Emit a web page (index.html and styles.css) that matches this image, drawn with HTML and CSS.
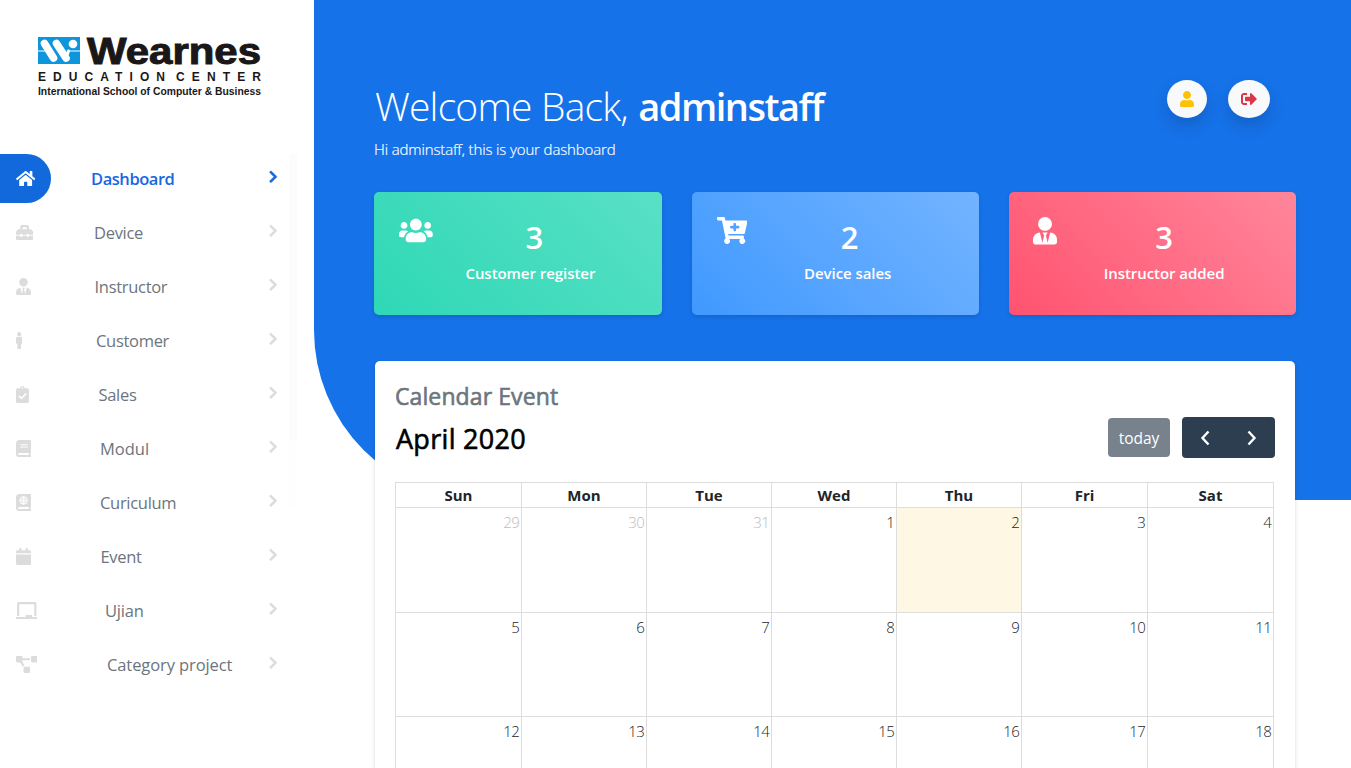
FILE: index.html
```html
<!DOCTYPE html>
<html lang="en">
<head>
<meta charset="utf-8">
<title>Dashboard</title>
<link rel="stylesheet" href="styles.css">
</head>
<body>
<div class="app">
  <aside class="sidebar">
    <svg class="logo" viewBox="0 0 226 62" role="img">
      <rect x="0" y="1" width="42" height="27" fill="#0e96dc"/>
      <g stroke="#fff" stroke-linecap="round" fill="none">
        <path d="M0 15h8M32 15h10" stroke-width="1.2"/>
        <path d="M6.500 7.500l9 14.500M18.500 7.500l9.500 14.500" stroke-width="7.600"/>
        <path d="M29.500 18l1-3" stroke-width="3"/>
      </g>
      <circle cx="35" cy="8" r="4.300" fill="#fff"/>
      <text class="logo-name" x="49" y="27.500" textLength="174" lengthAdjust="spacingAndGlyphs">Wearnes</text>
      <text class="logo-sub" x="0" y="44.500" textLength="127">EDUCATION</text>
      <text class="logo-sub" x="138" y="44.500" textLength="85">CENTER</text>
      <text class="logo-tag" x="0" y="58.500" textLength="223" lengthAdjust="spacingAndGlyphs">International School of Computer &amp; Business</text>
    </svg>
    <nav class="menu">
      <a class="item active"><span class="item-icon"><svg viewBox="0 0 576 512"><path d="M280.37 148.26L96 300.11V464a16 16 0 0 0 16 16l112.06-.29a16 16 0 0 0 15.92-16V368a16 16 0 0 1 16-16h64a16 16 0 0 1 16 16v95.64a16 16 0 0 0 16 16.05L464 480a16 16 0 0 0 16-16V300L295.67 148.26a12.19 12.19 0 0 0-15.3 0zM571.6 251.47L488 182.56V44.05a12 12 0 0 0-12-12h-56a12 12 0 0 0-12 12v72.61L318.47 43a48 48 0 0 0-61 0L4.34 251.47a12 12 0 0 0-1.6 16.9l25.500 31A12 12 0 0 0 45.15 301l235.22-193.740a12.19 12.19 0 0 1 15.300 0L530.9 301a12 12 0 0 0 16.900-1.600l25.500-31a12 12 0 0 0-1.700-16.930z"/></svg></span><span class="item-label l-dashboard">Dashboard</span><svg class="chev" viewBox="0 0 320 512"><path d="M285.476 272.971L91.132 467.314c-9.373 9.373-24.569 9.373-33.941 0l-22.667-22.667c-9.357-9.357-9.375-24.522-.04-33.901L188.505 256 34.484 101.255c-9.335-9.379-9.317-24.544.04-33.901l22.667-22.667c9.373-9.373 24.569-9.373 33.941 0L285.475 239.03c9.373 9.372 9.373 24.568.001 33.941z"/></svg></a>
      <a class="item"><span class="item-icon"><svg viewBox="0 0 512 512"><path d="M502.63 214.63l-45.25-45.25c-6-6-14.14-9.37-22.63-9.37H384V80c0-26.51-21.49-48-48-48H176c-26.51 0-48 21.49-48 48v80H77.25c-8.49 0-16.62 3.37-22.63 9.37L9.37 214.63c-6 6-9.37 14.14-9.37 22.63V320h128v-16c0-8.84 7.16-16 16-16h32c8.84 0 16 7.16 16 16v16h128v-16c0-8.84 7.16-16 16-16h32c8.84 0 16 7.16 16 16v16h128v-82.75c0-8.48-3.37-16.62-9.37-22.62zM320 160H192V96h128v64zm64 208c0 8.84-7.16 16-16 16h-32c-8.84 0-16-7.16-16-16v-16H192v16c0 8.84-7.16 16-16 16h-32c-8.84 0-16-7.16-16-16v-16H0v96c0 17.67 14.33 32 32 32h448c17.67 0 32-14.33 32-32v-96H384v16z"/></svg></span><span class="item-label l-device">Device</span><svg class="chev" viewBox="0 0 320 512"><path d="M285.476 272.971L91.132 467.314c-9.373 9.373-24.569 9.373-33.941 0l-22.667-22.667c-9.357-9.357-9.375-24.522-.04-33.901L188.505 256 34.484 101.255c-9.335-9.379-9.317-24.544.04-33.901l22.667-22.667c9.373-9.373 24.569-9.373 33.941 0L285.475 239.03c9.373 9.372 9.373 24.568.001 33.941z"/></svg></a>
      <a class="item"><span class="item-icon"><svg viewBox="0 0 448 512"><path d="M224 256c70.7 0 128-57.3 128-128S294.7 0 224 0 96 57.3 96 128s57.3 128 128 128zm95.8 32.6L272 480l-32-136 32-56h-96l32 56-32 136-47.8-191.4C56.9 292 0 350.3 0 422.4V464c0 26.5 21.5 48 48 48h352c26.5 0 48-21.5 48-48v-41.6c0-72.1-56.9-130.4-128.2-133.8z"/></svg></span><span class="item-label l-instructor">Instructor</span><svg class="chev" viewBox="0 0 320 512"><path d="M285.476 272.971L91.132 467.314c-9.373 9.373-24.569 9.373-33.941 0l-22.667-22.667c-9.357-9.357-9.375-24.522-.04-33.901L188.505 256 34.484 101.255c-9.335-9.379-9.317-24.544.04-33.901l22.667-22.667c9.373-9.373 24.569-9.373 33.941 0L285.475 239.03c9.373 9.372 9.373 24.568.001 33.941z"/></svg></a>
      <a class="item"><span class="item-icon"><svg viewBox="0 0 192 512"><path d="M96 0c35.346 0 64 28.654 64 64s-28.654 64-64 64-64-28.654-64-64S60.654 0 96 0m48 144h-11.36c-22.711 10.443-49.59 10.894-73.28 0H48c-26.51 0-48 21.49-48 48v136c0 13.255 10.745 24 24 24h16v136c0 13.255 10.745 24 24 24h64c13.255 0 24-10.745 24-24V352h16c13.255 0 24-10.745 24-24V192c0-26.51-21.49-48-48-48z"/></svg></span><span class="item-label l-customer">Customer</span><svg class="chev" viewBox="0 0 320 512"><path d="M285.476 272.971L91.132 467.314c-9.373 9.373-24.569 9.373-33.941 0l-22.667-22.667c-9.357-9.357-9.375-24.522-.04-33.901L188.505 256 34.484 101.255c-9.335-9.379-9.317-24.544.04-33.901l22.667-22.667c9.373-9.373 24.569-9.373 33.941 0L285.475 239.03c9.373 9.372 9.373 24.568.001 33.941z"/></svg></a>
      <a class="item"><span class="item-icon"><svg viewBox="0 0 384 512"><path fill-rule="evenodd" d="M336 64h-80c0-35.300-28.700-64-64-64s-64 28.700-64 64H48C21.500 64 0 85.500 0 112v352c0 26.500 21.500 48 48 48h288c26.500 0 48-21.500 48-48V112c0-26.500-21.500-48-48-48zM192 40c13.300 0 24 10.700 24 24s-10.700 24-24 24-24-10.700-24-24 10.700-24 24-24z"/><path class="cut" d="M86 290l76 76 142-142"/></svg></span><span class="item-label l-sales">Sales</span><svg class="chev" viewBox="0 0 320 512"><path d="M285.476 272.971L91.132 467.314c-9.373 9.373-24.569 9.373-33.941 0l-22.667-22.667c-9.357-9.357-9.375-24.522-.04-33.901L188.505 256 34.484 101.255c-9.335-9.379-9.317-24.544.04-33.901l22.667-22.667c9.373-9.373 24.569-9.373 33.941 0L285.475 239.03c9.373 9.372 9.373 24.568.001 33.941z"/></svg></a>
      <a class="item"><span class="item-icon"><svg viewBox="0 0 448 512"><path d="M448 360V24c0-13.3-10.7-24-24-24H96C43 0 0 43 0 96v320c0 53 43 96 96 96h328c13.3 0 24-10.7 24-24v-16c0-7.5-3.5-14.3-8.9-18.7-4.2-15.4-4.2-59.3 0-74.7 5.4-4.3 8.9-11.1 8.9-18.6zM128 134c0-3.3 2.7-6 6-6h212c3.3 0 6 2.7 6 6v20c0 3.3-2.7 6-6 6H134c-3.3 0-6-2.7-6-6v-20zm0 64c0-3.3 2.7-6 6-6h212c3.3 0 6 2.7 6 6v20c0 3.3-2.7 6-6 6H134c-3.3 0-6-2.7-6-6v-20zm253.4 250H96c-17.7 0-32-14.3-32-32 0-17.6 14.4-32 32-32h285.4c-1.9 17.1-1.9 46.9 0 64z"/></svg></span><span class="item-label l-modul">Modul</span><svg class="chev" viewBox="0 0 320 512"><path d="M285.476 272.971L91.132 467.314c-9.373 9.373-24.569 9.373-33.941 0l-22.667-22.667c-9.357-9.357-9.375-24.522-.04-33.901L188.505 256 34.484 101.255c-9.335-9.379-9.317-24.544.04-33.901l22.667-22.667c9.373-9.373 24.569-9.373 33.941 0L285.475 239.03c9.373 9.372 9.373 24.568.001 33.941z"/></svg></a>
      <a class="item"><span class="item-icon"><svg viewBox="0 0 448 512"><path d="M448 360V24c0-13.3-10.7-24-24-24H96C43 0 0 43 0 96v320c0 53 43 96 96 96h328c13.3 0 24-10.7 24-24v-16c0-7.5-3.5-14.3-8.9-18.7-4.2-15.4-4.2-59.3 0-74.7 5.4-4.3 8.9-11.1 8.9-18.6zM381.4 448H96c-17.7 0-32-14.3-32-32 0-17.6 14.4-32 32-32h285.4c-1.900 17.100-1.900 46.900 0 64z"/><g class="globe"><circle cx="224" cy="192" r="114"/><ellipse cx="224" cy="192" rx="50" ry="114"/><path d="M110 192h228M224 78v228"/></g></svg></span><span class="item-label l-curiculum">Curiculum</span><svg class="chev" viewBox="0 0 320 512"><path d="M285.476 272.971L91.132 467.314c-9.373 9.373-24.569 9.373-33.941 0l-22.667-22.667c-9.357-9.357-9.375-24.522-.04-33.901L188.505 256 34.484 101.255c-9.335-9.379-9.317-24.544.04-33.901l22.667-22.667c9.373-9.373 24.569-9.373 33.941 0L285.475 239.03c9.373 9.372 9.373 24.568.001 33.941z"/></svg></a>
      <a class="item"><span class="item-icon"><svg viewBox="0 0 448 512"><path d="M12 192h424c6.6 0 12 5.4 12 12v260c0 26.5-21.5 48-48 48H48c-26.5 0-48-21.5-48-48V204c0-6.6 5.4-12 12-12zm436-44v-36c0-26.5-21.5-48-48-48h-48V12c0-6.6-5.4-12-12-12h-40c-6.6 0-12 5.4-12 12v52H160V12c0-6.6-5.4-12-12-12h-40c-6.6 0-12 5.4-12 12v52H48C21.5 64 0 85.5 0 112v36c0 6.600 5.400 12 12 12h424c6.600 0 12-5.400 12-12z"/></svg></span><span class="item-label l-event">Event</span><svg class="chev" viewBox="0 0 320 512"><path d="M285.476 272.971L91.132 467.314c-9.373 9.373-24.569 9.373-33.941 0l-22.667-22.667c-9.357-9.357-9.375-24.522-.04-33.901L188.505 256 34.484 101.255c-9.335-9.379-9.317-24.544.04-33.901l22.667-22.667c9.373-9.373 24.569-9.373 33.941 0L285.475 239.03c9.373 9.372 9.373 24.568.001 33.941z"/></svg></a>
      <a class="item"><span class="item-icon"><svg viewBox="0 0 640 512"><path d="M96 64h448v352h64V40c0-22.06-17.94-40-40-40H72C49.94 0 32 17.94 32 40v376h64V64zm528 384H480v-64H288v64H16c-8.84 0-16 7.16-16 16v32c0 8.84 7.16 16 16 16h608c8.84 0 16-7.16 16-16v-32c0-8.84-7.16-16-16-16z"/></svg></span><span class="item-label l-ujian">Ujian</span><svg class="chev" viewBox="0 0 320 512"><path d="M285.476 272.971L91.132 467.314c-9.373 9.373-24.569 9.373-33.941 0l-22.667-22.667c-9.357-9.357-9.375-24.522-.04-33.901L188.505 256 34.484 101.255c-9.335-9.379-9.317-24.544.04-33.901l22.667-22.667c9.373-9.373 24.569-9.373 33.941 0L285.475 239.03c9.373 9.372 9.373 24.568.001 33.941z"/></svg></a>
      <a class="item"><span class="item-icon"><svg viewBox="0 0 640 512"><path d="M384 320H256c-17.67 0-32 14.33-32 32v128c0 17.67 14.33 32 32 32h128c17.67 0 32-14.33 32-32V352c0-17.67-14.33-32-32-32zM192 32c0-17.67-14.33-32-32-32H32C14.33 0 0 14.33 0 32v128c0 17.67 14.33 32 32 32h95.72l73.16 128.04C211.98 300.98 232.4 288 256 288h.28L192 175.51V128h224V64H192V32zM608 0H480c-17.67 0-32 14.33-32 32v128c0 17.67 14.33 32 32 32h128c17.67 0 32-14.33 32-32V32c0-17.67-14.33-32-32-32z"/></svg></span><span class="item-label l-category">Category project</span><svg class="chev" viewBox="0 0 320 512"><path d="M285.476 272.971L91.132 467.314c-9.373 9.373-24.569 9.373-33.941 0l-22.667-22.667c-9.357-9.357-9.375-24.522-.04-33.901L188.505 256 34.484 101.255c-9.335-9.379-9.317-24.544.04-33.901l22.667-22.667c9.373-9.373 24.569-9.373 33.941 0L285.475 239.03c9.373 9.372 9.373 24.568.001 33.941z"/></svg></a>
      <span class="rail"></span>
    </nav>
  </aside>

  <main class="main">
    <div class="backdrop"></div>
    <div class="content">
      <header class="top">
        <div>
          <h1 class="welcome">Welcome Back, <b>adminstaff</b></h1>
          <p class="hint">Hi adminstaff, this is your dashboard</p>
        </div>
        <div class="actions">
          <button class="round user"><svg viewBox="0 0 448 512"><path d="M224 256c70.7 0 128-57.3 128-128S294.7 0 224 0 96 57.3 96 128s57.3 128 128 128zm89.6 32h-16.7c-22.2 10.2-46.9 16-72.9 16s-50.6-5.8-72.9-16h-16.7C60.2 288 0 348.2 0 422.4V464c0 26.5 21.5 48 48 48h352c26.5 0 48-21.5 48-48v-41.6c0-74.2-60.2-134.4-134.4-134.4z"/></svg></button>
          <button class="round exit"><svg viewBox="0 0 512 512"><path d="M497 273L329 441c-15 15-41 4.5-41-17v-96H152c-13.3 0-24-10.7-24-24v-96c0-13.3 10.7-24 24-24h136V88c0-21.4 25.9-32 41-17l168 168c9.3 9.4 9.3 24.6 0 34zM192 436v-40c0-6.6-5.4-12-12-12H96c-17.7 0-32-14.3-32-32V160c0-17.7 14.3-32 32-32h84c6.6 0 12-5.4 12-12V76c0-6.6-5.4-12-12-12H96c-53 0-96 43-96 96v192c0 53 43 96 96 96h84c6.6 0 12-5.4 12-12z"/></svg></button>
        </div>
      </header>

      <section class="cards">
        <article class="card green">
          <svg viewBox="0 0 640 512"><path d="M96 224c35.3 0 64-28.7 64-64s-28.7-64-64-64-64 28.7-64 64 28.7 64 64 64zm448 0c35.3 0 64-28.7 64-64s-28.7-64-64-64-64 28.7-64 64 28.7 64 64 64zm32 32h-64c-17.6 0-33.5 7.1-45.1 18.6 40.3 22.1 68.9 62 75.1 109.4h66c17.7 0 32-14.3 32-32v-32c0-35.3-28.7-64-64-64zm-256 0c61.9 0 112-50.1 112-112S381.9 32 320 32 208 82.1 208 144s50.1 112 112 112zm76.8 32h-8.3c-20.8 10-43.9 16-68.5 16s-47.6-6-68.5-16h-8.3C179.6 288 128 339.6 128 403.2V432c0 26.5 21.5 48 48 48h288c26.5 0 48-21.5 48-48v-28.8c0-63.6-51.6-115.2-115.2-115.2zm-223.7-13.4C161.5 263.1 145.6 256 128 256H64c-35.3 0-64 28.7-64 64v32c0 17.7 14.3 32 32 32h65.9c6.3-47.4 34.9-87.3 75.2-109.4z"/></svg>
          <div class="stat"><strong>3</strong><span>Customer register</span></div>
        </article>
        <article class="card blue">
          <svg viewBox="0 0 576 512"><path d="M504.717 320H211.572l6.545 32h268.418c15.401 0 26.816 14.301 23.403 29.319l-5.517 24.276C523.112 414.668 536 433.828 536 456c0 31.202-25.519 56.444-56.824 55.994-29.823-.429-54.35-24.631-55.155-54.447-.44-16.287 6.085-31.049 16.803-41.548H231.176C241.553 426.165 248 440.326 248 456c0 31.813-26.528 57.431-58.67 55.938-28.54-1.325-51.751-24.385-53.251-52.917-1.158-22.034 10.436-41.455 28.051-51.586L93.883 64H24C10.745 64 0 53.255 0 40V24C0 10.745 10.745 0 24 0h102.529c11.401 0 21.228 8.021 23.513 19.19L159.208 64H551.99c15.401 0 26.816 14.301 23.403 29.319l-47.273 208C525.637 312.246 515.923 320 504.717 320zM408 168h-48v-40c0-8.837-7.163-16-16-16h-16c-8.837 0-16 7.163-16 16v40h-48c-8.837 0-16 7.163-16 16v16c0 8.837 7.163 16 16 16h48v40c0 8.837 7.163 16 16 16h16c8.837 0 16-7.163 16-16v-40h48c8.837 0 16-7.163 16-16v-16c0-8.837-7.163-16-16-16z"/></svg>
          <div class="stat"><strong>2</strong><span>Device sales</span></div>
        </article>
        <article class="card red">
          <svg viewBox="0 0 448 512"><path d="M224 256c70.7 0 128-57.3 128-128S294.7 0 224 0 96 57.3 96 128s57.3 128 128 128zm95.8 32.6L272 480l-32-136 32-56h-96l32 56-32 136-47.8-191.4C56.9 292 0 350.3 0 422.4V464c0 26.5 21.5 48 48 48h352c26.5 0 48-21.5 48-48v-41.6c0-72.1-56.9-130.4-128.2-133.8z"/></svg>
          <div class="stat"><strong>3</strong><span>Instructor added</span></div>
        </article>
      </section>

      <section class="calendar">
        <h2 class="cal-title">Calendar Event</h2>
        <div class="toolbar">
          <h3 class="month">April 2020</h3>
          <div class="tools">
            <button class="today">today</button>
            <div class="nav">
              <svg viewBox="0 0 12 18"><path d="M9.500 2.500L3.500 9l6 6.500"/></svg>
              <svg viewBox="0 0 12 18"><path d="M2.500 2.500l6 6.500-6 6.500"/></svg>
            </div>
          </div>
        </div>
        <div class="grid">
          <div class="dow">Sun</div><div class="dow">Mon</div><div class="dow">Tue</div><div class="dow">Wed</div><div class="dow">Thu</div><div class="dow">Fri</div><div class="dow">Sat</div>
          <div class="day other">29</div><div class="day other">30</div><div class="day other">31</div><div class="day">1</div><div class="day now">2</div><div class="day">3</div><div class="day">4</div>
          <div class="day">5</div><div class="day">6</div><div class="day">7</div><div class="day">8</div><div class="day">9</div><div class="day">10</div><div class="day">11</div>
          <div class="day">12</div><div class="day">13</div><div class="day">14</div><div class="day">15</div><div class="day">16</div><div class="day">17</div><div class="day">18</div>
        </div>
      </section>
    </div>
  </main>
</div>
</body>
</html>
```
FILE: styles.css
```css
* { box-sizing: border-box; }
html, body { margin: 0; height: 100%; overflow: hidden; }
body { background: #fff; font-family: "Open Sans", "Noto Sans", sans-serif; color: #212529; }
h1, h2, h3, p { margin: 0; }
button { border: 0; padding: 0; font-family: inherit; }
.app { display: flex; height: 768px; overflow: hidden; }

/* sidebar */
.sidebar { flex: none; width: 314px; padding-top: 36px; }
.logo { display: block; width: 226px; height: 62px; margin-left: 38px; overflow: visible; }
.logo text { font-family: "Liberation Sans", sans-serif; font-weight: 700; fill: #1b1718; }
.logo .logo-name { font-size: 36px; stroke: #1b1718; stroke-width: 1px; }
.logo .logo-sub { font-size: 12px; }
.logo .logo-tag { font-size: 10.3px; }
.menu { position: relative; display: flex; flex-direction: column; gap: 5px; margin-top: 56px; }
.item { display: flex; align-items: center; height: 49px; color: #6c757d; font-size: 16.5px; }
.item-icon { flex: none; display: flex; align-items: center; width: 51px; height: 49px; padding-left: 16px; border-radius: 0 25px 25px 0; }
.item-icon svg { flex: none; height: 17.2px; fill: #dcdcdc; }
.item-label { flex: none; width: 218px; white-space: nowrap; }
.chev { flex: none; height: 13.5px; margin-top: -3px; fill: #dcdcdc; stroke: #dcdcdc; stroke-width: 24px; overflow: visible; }
.active { color: #1768e0; font-weight: 600; }
.active .item-icon { background: #1269db; }
.active .item-icon svg { fill: #fff; }
.active .chev { fill: #1768e0; stroke: #1768e0; }
.cut { fill: none; stroke: #fff; stroke-width: 50px; }
.globe { fill: none; stroke: #fff; stroke-width: 26px; }
.l-dashboard { padding-left: 40px; letter-spacing: -0.45px; }
.l-device { padding-left: 43px; letter-spacing: -0.3px; }
.l-instructor { padding-left: 43.5px; letter-spacing: -0.3px; }
.l-customer { padding-left: 45px; letter-spacing: -0.3px; }
.l-sales { padding-left: 47.5px; letter-spacing: -0.3px; }
.l-modul { padding-left: 49px; letter-spacing: 0; }
.l-curiculum { padding-left: 49px; letter-spacing: -0.3px; }
.l-event { padding-left: 49.5px; letter-spacing: -0.3px; }
.l-ujian { padding-left: 54px; letter-spacing: -0.2px; }
.l-category { padding-left: 56px; letter-spacing: -0.1px; }
.rail { position: absolute; left: 289px; top: 0; width: 8px; height: 354px; background: linear-gradient(#fcfcfc 286px, #fefefe 286px); }

/* main */
.main { position: relative; flex: 1; }
.backdrop { position: absolute; inset: 0 0 auto 0; height: 500px; background: #1672e9; border-bottom-left-radius: 170px; }
.content { position: relative; padding: 80px 55px 0 60px; }
.top { display: flex; justify-content: space-between; height: 112px; padding-right: 26px; color: #fff; }
.welcome { padding-left: 1px; font-size: 39px; font-weight: 300; line-height: 51px; letter-spacing: -0.8px; white-space: nowrap; }
.welcome b { margin-left: 1px; font-size: 38px; font-weight: 600; letter-spacing: -1.5px; }
.hint { margin-top: 7px; font-size: 15px; font-weight: 300; line-height: 20px; letter-spacing: -0.13px; -webkit-text-stroke: 0.2px; }
.actions { display: flex; gap: 21px; }
.round { display: flex; align-items: center; justify-content: center; width: 40px; height: 38px; border-radius: 50%; background: #f8f9fa; box-shadow: 0 8px 16px rgba(0, 0, 0, .15); }
.round svg { height: 16px; }
.user { fill: #ffc107; }
.exit { width: 42px; fill: #dc3545; }

.cards { display: grid; grid-template-columns: 288px 287px 287px; gap: 30px; }
.card { display: flex; height: 123px; padding: 25px; border-radius: 5px; color: #fff; fill: #fff; box-shadow: 0 2px 4px rgba(0, 0, 0, .12); }
.card svg { flex: none; height: 27px; }
.green { background: linear-gradient(45deg, #2ed8b6, #59e0c5); }
.blue { background: linear-gradient(45deg, #4099ff, #73b4ff); }
.red { background: linear-gradient(45deg, #ff5370, #ff869a); }
.stat { display: flex; flex-direction: column; align-items: center; flex: 1; font-weight: 600; white-space: nowrap; }
.stat strong { font-size: 31px; font-weight: 600; line-height: 40px; }
.stat span { margin-top: 6px; font-size: 15px; line-height: 20px; letter-spacing: -0.05px; }
.green svg { margin-right: -9px; }
.green strong { padding-left: 8px; }
.blue svg { margin-right: -6px; }
.blue strong { padding-left: 4px; }
.red svg { height: 27.5px; margin-left: -1px; }

/* calendar */
.calendar { height: 440px; margin: 46px 0 0 1px; width: 920px; padding: 20px; background: #fff; border-radius: 5px; box-shadow: 0 2px 4px rgba(0, 0, 0, .15); }
.cal-title { color: #6c757d; font-size: 23px; font-weight: 400; line-height: 31px; letter-spacing: 0.1px; -webkit-text-stroke: 0.6px; }
.toolbar { display: flex; justify-content: space-between; margin-top: 5px; height: 41px; }
.month { padding-left: 1px; color: #000; font-size: 27px; font-weight: 400; line-height: 44px; letter-spacing: 0.3px; -webkit-text-stroke: 0.6px; }
.tools { display: flex; align-items: center; gap: 12px; }
.today { width: 62px; height: 39px; border-radius: 4px; background: #78828d; color: #fff; font-size: 15.5px; letter-spacing: 0; }
.nav { display: flex; align-items: center; justify-content: space-around; width: 93px; height: 41px; border-radius: 4px; background: #2c3e50; }
.nav svg { width: 12px; height: 18px; fill: none; stroke: #fff; stroke-width: 2.4px; }
.grid { display: grid; grid-template-columns: 126px 125px 125px 125px 125px 126px 126px; grid-template-rows: 25px 105px 104px 104px; width: 879px; margin-top: 24px; border: solid #ddd; border-width: 1px 0 0 1px; }
.dow, .day { border: solid #ddd; border-width: 0 1px 1px 0; }
.dow { text-align: center; font-size: 15px; font-weight: 700; line-height: 24px; }
.day { padding: 4px 2px 0 0; text-align: right; font-size: 15px; font-weight: 300; line-height: 21px; letter-spacing: -0.7px; }
.other { color: #bcbcbc; }
.now { background: #fdf7e3; }
```
